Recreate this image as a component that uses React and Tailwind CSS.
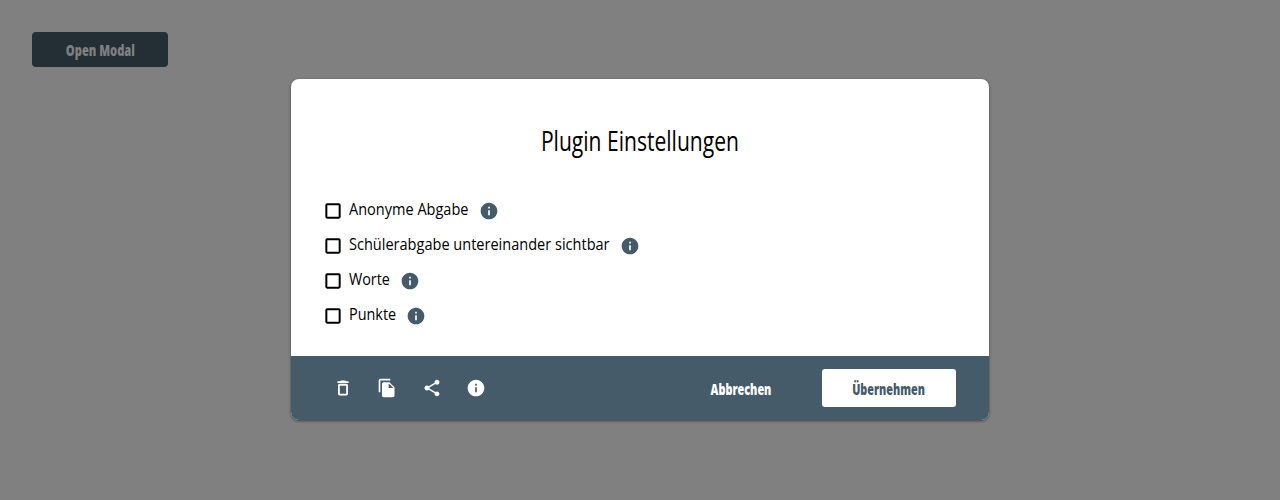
import { MdFileCopy, MdInfo, MdShare } from 'react-icons/md';

const options = [
  { label: 'Anonyme Abgabe', width: 'w-[119px]', scale: 'scale-x-[0.937]' },
  { label: 'Schülerabgabe untereinander sichtbar', width: 'w-[260px]', scale: 'scale-x-[0.938]' },
  { label: 'Worte', width: 'w-[40px]', scale: 'scale-x-[0.925]' },
  { label: 'Punkte', width: 'w-[46px]', scale: 'scale-x-[0.93]' },
];

function Checkbox() {
  return (
    <svg viewBox="0 0 24 24" className="mt-1 size-5 shrink-0" fill="none" stroke="currentColor" strokeWidth="2.4">
      <rect x="4" y="4" width="16" height="16" rx="1" />
    </svg>
  );
}

function TrashIcon() {
  return (
    <svg viewBox="0 0 24 24" className="size-5" fill="currentColor">
      <path
        fillRule="evenodd"
        d="M6 19c0 1.1.9 2 2 2h8c1.1 0 2-.9 2-2V9c0-1.1-.9-2-2-2H8c-1.1 0-2 .9-2 2v10zM8.2 9.2h7.6v9.6H8.2V9.2zM15.5 4l-.7-.7c-.2-.2-.45-.3-.7-.3H9.9c-.25 0-.5.1-.7.3l-.7.7H6c-.55 0-1 .45-1 1s.45 1 1 1h12c.55 0 1-.45 1-1s-.45-1-1-1h-2.5z"
      />
    </svg>
  );
}

export default function App() {
  return (
    <div className="relative h-[500px] overflow-hidden bg-[#808080] p-8 font-['Open_Sans',sans-serif]">
      <button className="flex h-[35px] w-[136px] items-center justify-center rounded bg-[#232e35] text-[15px] font-extrabold text-[#808080]">
        <span className="origin-center scale-x-[0.745] whitespace-nowrap pt-0.5">Open Modal</span>
      </button>
      <div className="absolute inset-0 flex items-start justify-center pt-[79px]">
        <div className="flex h-[341px] w-[698px] flex-col overflow-hidden rounded-lg bg-white shadow-[0_1px_3px_rgba(0,0,0,0.5)]">
          <h1 className="flex h-[112px] items-center justify-center pt-2.5 text-[27px] leading-none text-black">
            <span className="scale-x-[0.78] whitespace-nowrap">Plugin Einstellungen</span>
          </h1>
          <div className="flex flex-1 flex-col pl-8">
            {options.map(({ label, width, scale }) => (
              <label key={label} className="flex h-[35px] items-center text-[15.5px] text-black">
                <Checkbox />
                <span className={`ml-1.5 shrink-0 whitespace-nowrap pt-0.5 ${width}`}>
                  <span className={`inline-block origin-left ${scale}`}>{label}</span>
                </span>
                <MdInfo size={20} className="mt-1 ml-[11px] shrink-0 text-[#455b6a]" />
              </label>
            ))}
          </div>
          <footer className="flex h-16 items-center bg-[#455b6a] pr-[33px] pl-[42px] text-[15px] font-extrabold text-white">
            <div className="flex gap-[24.4px]">
              <TrashIcon />
              <MdFileCopy size={20} />
              <MdShare size={20} />
              <MdInfo size={20} />
            </div>
            <button className="ml-auto flex h-[38px] w-[134px] items-center justify-center">
              <span className="scale-x-[0.725] whitespace-nowrap pt-0.5">Abbrechen</span>
            </button>
            <button className="ml-3.5 flex h-[38px] w-[134px] items-center justify-center rounded-[3px] bg-white text-[#455b6a]">
              <span className="scale-x-[0.72] whitespace-nowrap pt-0.5">Übernehmen</span>
            </button>
          </footer>
        </div>
      </div>
    </div>
  );
}
